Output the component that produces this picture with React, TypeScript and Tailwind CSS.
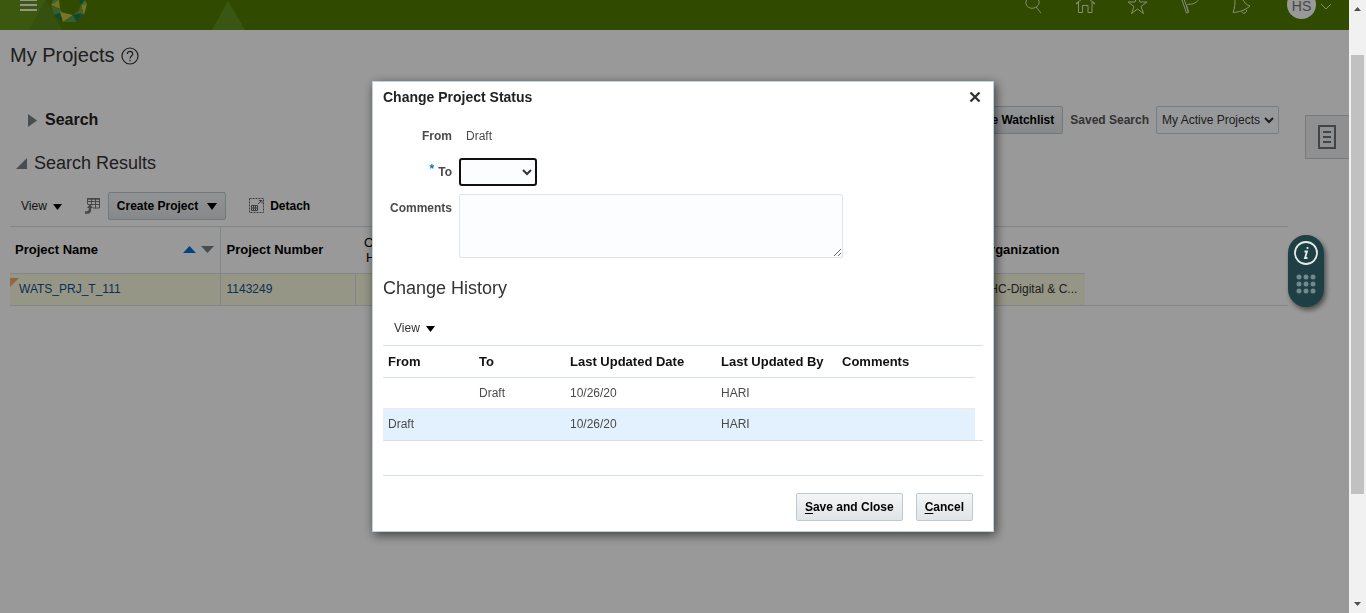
import React from "react";

function Triangle({ dir, className }: { dir: "up" | "down" | "right" | "corner"; className: string }) {
  const points = {
    up: "0,10 5,0 10,10",
    down: "0,0 10,0 5,10",
    right: "0,0 10,5 0,10",
    corner: "10,0 10,10 0,10",
  }[dir];
  return (
    <svg viewBox="0 0 10 10" preserveAspectRatio="none" className={className} fill="currentColor" aria-hidden="true">
      <polygon points={points} />
    </svg>
  );
}

function Logo() {
  return (
    <svg width="38" height="23" viewBox="0 0 38 23" aria-hidden="true">
      <polygon points="3,0 10,0 1,5" fill="#6fa04a" />
      <polygon points="1,5 9,0 10,9" fill="#c0bc3e" />
      <polygon points="1,5 10,9 4,15" fill="#5f9a48" />
      <polygon points="4,15 10,9 13,13" fill="#6fa04a" />
      <polygon points="4,15 11,12 13,22" fill="#147a4c" />
      <polygon points="10,12 23,15 13,22" fill="#c9c440" />
      <polygon points="23,15 27,22 13,22" fill="#5f9a48" />
      <polygon points="23,15 31,13 27,22" fill="#147a4c" />
      <polygon points="31,13 34,15 27,22" fill="#2d7d58" />
      <polygon points="23,15 28,11 32,13" fill="#5f9a48" />
      <polygon points="31,5 37,4 34,15" fill="#c9c440" />
      <polygon points="31,5 34,15 28,12" fill="#6fa04a" />
      <polygon points="29,0 35,0 31,5" fill="#147a4c" />
      <polygon points="35,0 37,4 31,5" fill="#88ac48" />
    </svg>
  );
}

function Header() {
  return (
    <header className="relative flex h-[30px] items-start justify-between overflow-hidden bg-[#507d00] pr-[17px] pl-5">
      <svg className="absolute inset-0 h-[30px] w-[260px]" viewBox="0 0 260 30" aria-hidden="true">
        <polygon points="0,0 46,0 29,30 0,30" fill="#65931a" />
        <polygon points="46,0 62,30 29,30" fill="#5a861a" />
        <polygon points="228,1 245,30 212,30" fill="#629020" />
      </svg>
      <div className="relative flex items-start gap-3">
        <button aria-label="Menu" className="h-3 w-[18px]">
          <svg width="18" height="12" viewBox="0 0 18 12" fill="#f4f4ee" aria-hidden="true">
            <path d="M0 0h17v1H0zM0 4h17v2H0zM0 9h17v2H0z" />
          </svg>
        </button>
        <a href="#home" aria-label="Home page"><Logo /></a>
      </div>
      <div className="relative flex items-start text-[#e2e9d0]">
        <svg width="234" height="20" viewBox="1019 0 234 20" fill="none" stroke="currentColor" strokeWidth="1" aria-hidden="true">
          <path d="M1026.500 0C1024 5 1029 9.500 1034 8C1039 6 1040 3 1038.500 0M1036 7l5 6" />
          <path d="M1076 3.500l9.500-7 9.500 7M1078.500 2v10.500h4v-7h5.500v7h4V2M1076 4l2-1M1095 4l-2-1" />
          <path d="M1137.500-5l-2.500 7h-7l6 4.500-2.500 7 6-4.500 6 4.500-2.500-7 6-4.500h-7z" />
          <path d="M1182 0l4.500 13 2-.5-2-7c3-3 6 1 12-5.500M1184-1l4.500 13" />
          <path d="M1235-2c0 5 0 10-2 14.500 6-.5 12-2 17-6.500-4-1-6-4-8-8M1242 11.500c0 3 5 2 4.500-1.500" />
        </svg>
        <button aria-label="User menu HS" className="ml-[34px] flex items-start gap-1">
          <span className="-mt-2.5 flex h-[29px] w-[29px] items-center justify-center rounded-full bg-white pt-0.5 text-sm leading-[10px] text-[#777]">HS</span>
          <svg className="mt-[3px]" width="12" height="7" viewBox="0 0 12 7" fill="none" stroke="currentColor" aria-hidden="true"><path d="M1 1l5 5 5-5" /></svg>
        </button>
      </div>
    </header>
  );
}

function ImportIcon() {
  return (
    <svg width="16" height="16" viewBox="0 0 16 16" fill="none" stroke="#777" aria-hidden="true">
      <path d="M2.500 6V.5h12v9.500H8M2.500 3.500h12M2.500 6.500h12M6.500 .5v6M10.500 .5v10" />
      <path d="M2 1h13" strokeWidth="1.500" />
      <path d="M0 14.500h2.500Q5 14.500 5 11V9" strokeWidth="2.500" />
      <path d="M2 10l3-4 3 4z" fill="#777" stroke="none" />
    </svg>
  );
}

function DetachIcon() {
  return (
    <svg width="16" height="16" viewBox="0 0 16 16" fill="none" stroke="#666" aria-hidden="true">
      <rect x=".5" y=".5" width="14" height="14" strokeDasharray="2 1" />
      <path d="M2.500 7.500h6v5h-6zM2.500 10h6M4.500 7.500v5M6.500 7.500v5M9 6l4-4M10 2.500h3v3" />
    </svg>
  );
}

function Chevron() {
  return (
    <svg className="pointer-events-none absolute right-[5px] h-[7px] w-[10px]" viewBox="0 0 10 7" fill="none" stroke="#333" strokeWidth="2" aria-hidden="true">
      <path d="M1 1l4 4 4-4" />
    </svg>
  );
}

const buttonStyle = "h-7 rounded-[2px] border border-[#bccad4] bg-linear-to-b from-[#f3f5f6] to-[#e0e4e7] px-2 text-xs font-bold text-black";

function ProjectsPage() {
  return (
    <main className="px-2.5">
      <div className="flex h-[50px] items-center gap-[7px]">
        <h1 className="text-xl text-[#333]">My Projects</h1>
        <svg className="mt-0.5" width="18" height="18" viewBox="0 0 18 18" fill="none" stroke="#333" strokeWidth="1.200" aria-hidden="true">
          <circle cx="9" cy="9" r="8" />
          <path d="M6.300 7c0-3.500 5.400-3.500 5.400 0 0 2-2.700 2-2.700 4.500M9 12.800v1.400" />
        </svg>
      </div>
      <div className="mt-[22px] flex h-9 items-center justify-between pr-15 pl-[18px]">
        <button className="flex items-center gap-2 text-base font-bold text-[#222]">
          <Triangle dir="right" className="h-[13px] w-[9px] text-[#778087]" />
          Search
        </button>
        <div className="flex items-center gap-[7px] text-xs">
          <button className={buttonStyle}>Manage Watchlist</button>
          <label htmlFor="saved" className="font-bold text-[#555]">Saved Search</label>
          <div className="relative flex items-center">
            <select id="saved" className="h-7 w-[123px] appearance-none rounded-[2px] border border-[#cbd3d9] bg-[#fcfdff] pl-[5px] text-xs text-[#333]">
              <option>My Active Projects</option>
            </select>
            <Chevron />
          </div>
        </div>
      </div>
      <button className="mt-[11px] ml-1.5 flex h-7 items-center gap-[7px] text-lg text-[#333]">
        <Triangle dir="corner" className="h-[11px] w-[11px] text-[#778087]" />
        Search Results
      </button>
      <div className="mt-[15px] flex h-7 items-center pl-[11px] text-xs text-black">
        <button className="flex items-center gap-1.5 text-[#222]">
          View
          <Triangle dir="down" className="mt-0.5 h-1.5 w-[9px] text-black" />
        </button>
        <button aria-label="Import" className="ml-[23px]"><ImportIcon /></button>
        <button className={`${buttonStyle} ml-[7px] flex items-center gap-[9px]`}>
          Create Project
          <Triangle dir="down" className="h-[7px] w-[10px] text-black" />
        </button>
        <button className="ml-[23px] flex items-center gap-[5px] font-bold">
          <DetachIcon />
          Detach
        </button>
      </div>
      <div className="mt-1.5 mr-[51px] border-y border-[#d6dfe6]">
        <table className="w-[1075px] table-fixed border-collapse text-left text-xs">
          <colgroup>
            <col className="w-[210px]" />
            <col className="w-[135px]" />
            <col className="w-[101px]" />
            <col />
            <col className="w-[115px]" />
          </colgroup>
          <thead className="text-[13px] text-black">
            <tr className="h-[46px] border-b border-[#d6dfe6]">
              <th className="border-r border-[#d6dfe6] pr-1.5 pl-[5px]">
                <div className="flex items-center">
                  <span className="flex-1">Project Name</span>
                  <Triangle dir="up" className="h-[7px] w-[13px] text-[#0572ce]" />
                  <Triangle dir="down" className="ml-[5px] h-[7px] w-[13px] text-[#778087]" />
                </div>
              </th>
              <th className="pl-1.5">Project Number</th>
              <th className="pl-[9px] leading-[15px] font-normal">O<br /><span className="pl-0.5">H</span></th>
              <th />
              <th className="pl-2.5">Organization</th>
            </tr>
          </thead>
          <tbody>
            <tr className="h-8 bg-[#fafae1]">
              <td className="relative border-r border-[#d6dfe6] pl-[9px]">
                <svg className="absolute top-1 left-0" width="9" height="9" viewBox="0 0 9 9" aria-hidden="true"><path d="M0 0h9L0 9z" fill="#f8a870" /></svg>
                <a href="#project" className="text-[#12508a]">WATS_PRJ_T_111</a>
              </td>
              <td className="border-r border-[#d6dfe6] pl-1.5"><a href="#number" className="text-[#12508a]">1143249</a></td>
              <td />
              <td />
              <td className="pl-2 text-[#333]">WHC-Digital &amp; C...</td>
            </tr>
          </tbody>
        </table>
      </div>
    </main>
  );
}

const history = [
  { from: "", to: "Draft", date: "10/26/20", by: "HARI", comments: "" },
  { from: "Draft", to: "", date: "10/26/20", by: "HARI", comments: "" },
];

function StatusDialog() {
  return (
    <div className="fixed inset-0 z-10 flex items-center justify-center bg-black/40">
      <section role="dialog" aria-labelledby="dialog-title" className="w-[622px] border border-[#c4d0da] bg-white px-2.5 pb-2.5 text-xs text-[#4a4a4a] shadow-[2px_3px_10px_rgba(0,0,0,0.6)]">
        <div className="flex h-[30px] items-center justify-between pr-0.5">
          <h2 id="dialog-title" className="text-sm font-bold text-[#222]">Change Project Status</h2>
          <button aria-label="Close">
            <svg width="12" height="12" viewBox="0 0 12 12" stroke="#333" strokeWidth="2.400" aria-hidden="true"><path d="M1.500 1.500l9 9M10.500 1.500l-9 9" /></svg>
          </button>
        </div>
        <div className="mt-2.5 grid grid-cols-[69px_1fr] gap-x-[7px] gap-y-2">
          <span className="flex h-7 items-center justify-end font-bold">From</span>
          <span className="flex h-7 items-center pl-[7px]">Draft</span>
          <label htmlFor="to" className="flex h-7 items-center justify-end gap-1 font-bold">
            <span className="mb-1.5 text-[#0572ce]">*</span>To
          </label>
          <div className="relative flex w-[78px] items-center">
            <select id="to" className="h-7 w-full appearance-none rounded-[3px] border-2 border-[#101010] bg-[#fcfdff]" />
            <Chevron />
          </div>
          <label htmlFor="comments" className="flex h-7 items-center justify-end font-bold">Comments</label>
          <textarea id="comments" className="h-16 w-96 rounded-[2px] border border-[#dfe4e7] bg-[#fcfdfe]" />
        </div>
        <h3 className="mt-4 text-lg text-[#333]">Change History</h3>
        <button className="mt-4 ml-[11px] flex h-5 items-center gap-1.5 text-[#333]">
          View
          <Triangle dir="down" className="mt-0.5 h-1.5 w-[9px] text-black" />
        </button>
        <div className="mt-[7px] border-y border-[#d6dfe6] pr-2">
          <table className="w-full table-fixed border-collapse text-left">
            <colgroup>
              <col className="w-[91px]" />
              <col className="w-[91px]" />
              <col className="w-[151px]" />
              <col className="w-[121px]" />
              <col />
            </colgroup>
            <thead className="text-[13px] text-[#111]">
              <tr className="h-[31px] border-b border-[#d6dfe6]">
                {["From", "To", "Last Updated Date", "Last Updated By", "Comments"].map((name) => (
                  <th key={name} className="pl-[5px]">{name}</th>
                ))}
              </tr>
            </thead>
            <tbody>
              {history.map((row, i) => (
                <tr key={i} className="h-[31px] border-[#ebebeb] not-last:border-b last:h-8 last:bg-[#e3f1ff]">
                  {Object.values(row).map((value, j) => (
                    <td key={j} className="pl-[5px]">{value}</td>
                  ))}
                </tr>
              ))}
            </tbody>
          </table>
        </div>
        <div className="mt-[34px] flex justify-end gap-[13px] border-t border-[#d6dfe6] pt-[17px] pr-2.5">
          <button className={buttonStyle}><u className="underline-offset-2">S</u>ave and Close</button>
          <button className={buttonStyle}><u className="underline-offset-2">C</u>ancel</button>
        </div>
      </section>
    </div>
  );
}

function GuideWidget() {
  return (
    <button aria-label="Guide" className="fixed top-[235px] right-[42px] z-20 flex h-[72px] w-9 flex-col items-center gap-[9px] rounded-full bg-[#1e3f43] pt-1.5 shadow-[2px_3px_5px_rgba(0,0,0,0.5)]">
      <svg width="24" height="24" viewBox="0 0 24 24" fill="none" stroke="#e6eaea" aria-hidden="true">
        <circle cx="12" cy="12" r="11" strokeWidth="1.800" />
        <path d="M10.500 10.500h2.500l-2 6.500h2.500M13.500 6v2" strokeWidth="1.800" />
      </svg>
      <svg width="20" height="20" viewBox="0 0 20 20" fill="#71898c" aria-hidden="true">
        {[3, 10, 17].map((y) => [3, 10, 17].map((x) => <circle key={`${x}-${y}`} cx={x} cy={y} r="2.500" />))}
      </svg>
    </button>
  );
}

export default function App() {
  return (
    <div className="flex h-screen overflow-hidden bg-white font-['Liberation_Sans',Arial,sans-serif]">
      <div className="relative min-w-0 flex-1">
        <Header />
        <ProjectsPage />
        <button aria-label="Notes" className="absolute top-[115px] right-0 flex h-11 w-11 items-center border border-r-0 border-[#c4ccd2] bg-[#f0f0f0] pl-3">
          <svg width="18" height="24" viewBox="0 0 18 24" fill="none" stroke="#69747b" strokeWidth="2" aria-hidden="true">
            <path d="M1 1h16v22H1zM5 7h8M5 12h8M5 17h8" />
          </svg>
        </button>
      </div>
      <div className="relative z-20 flex w-[17px] flex-col items-center justify-between bg-[#f1f1f1] py-[7px]" aria-hidden="true">
        <Triangle dir="up" className="h-1 w-[7px] text-[#505050]" />
        <Triangle dir="down" className="h-1 w-[7px] text-[#505050]" />
        <div className="absolute top-[55px] h-[439px] w-[13px] bg-[#c1c1c1]" />
      </div>
      <GuideWidget />
      <StatusDialog />
    </div>
  );
}
